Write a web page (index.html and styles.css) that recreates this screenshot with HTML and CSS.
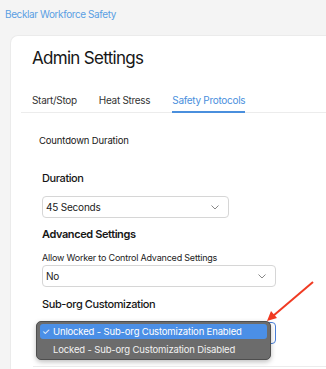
FILE: index.html
```html
<!DOCTYPE html>
<html>
<head>
<meta charset="utf-8">
<link rel="stylesheet" href="styles.css">
</head>
<body>
<div class="brand">Becklar Workforce Safety</div>
<div class="card">
  <h1 class="title">Admin Settings</h1>
  <div class="tabs">
    <span class="tab">Start/Stop</span>
    <span class="tab">Heat Stress</span>
    <span class="tab active">Safety Protocols</span>
  </div>
  <div class="content">
    <div class="section-title">Countdown Duration</div>
    <div class="fields">
      <div class="label first">Duration</div>
      <div class="select short"><span>45 Seconds</span><svg class="chev" width="8" height="5" viewBox="0 0 8 5"><path d="M0.5 0.5 L4 4 L7.5 0.5" fill="none" stroke="#888" stroke-width="1"/></svg></div>
      <div class="label adv">Advanced Settings</div>
      <div class="sublabel">Allow Worker to Control Advanced Settings</div>
      <div class="select"><span>No</span><svg class="chev" width="8" height="5" viewBox="0 0 8 5"><path d="M0.5 0.5 L4 4 L7.5 0.5" fill="none" stroke="#888" stroke-width="1"/></svg></div>
      <div class="label sub">Sub-org Customization</div>
      <div class="select-wrap">
        <div class="select focused"></div>
        <div class="menu">
          <div class="item selected"><span class="check">✓</span>Unlocked - Sub-org Customization Enabled</div>
          <div class="item">Locked - Sub-org Customization Disabled</div>
        </div>
      </div>
    </div>
    <div class="bottom-line"></div>
  </div>
</div>
<svg class="arrow" width="60" height="50" viewBox="0 0 60 50">
  <line x1="53" y1="3" x2="13" y2="37" stroke="#f03a22" stroke-width="2"/>
  <path d="M7 42 L11 32 L17 39 Z" fill="#f03a22"/>
</svg>
</body>
</html>
```
FILE: styles.css
```css
html, body {
  margin: 0;
  padding: 0;
}
body {
  background: #f4f4f4;
  font-family: Inter, "Noto Sans", sans-serif;
  width: 326px;
  height: 369px;
  overflow: hidden;
  position: relative;
}
.brand {
  color: #5a9fe3;
  font-size: 10px;
  letter-spacing: -0.4px;
  line-height: 14px;
  padding: 7px 0 0 5px;
}
.card {
  margin: 14px 0 0 10px;
  height: 334px;
  background: #fff;
  border-radius: 8px 0 0 0;
  border: 1px solid #ebebeb;
  border-right: none;
  border-bottom: none;
  box-sizing: border-box;
  overflow: hidden;
}
.title {
  margin: 0;
  padding: 10px 0 0 21px;
  font-size: 17px;
  letter-spacing: -0.7px;
  font-weight: 400;
  line-height: 24px;
  color: #161616;
}
.tabs {
  margin: 22px 0 0 10px;
  border-bottom: 1px solid #ececec;
  display: flex;
  padding-left: 11px;
}
.tab {
  font-size: 10px;
  letter-spacing: -0.3px;
  line-height: 14px;
  color: #333;
  padding: 1px 0 4px;
  margin-right: 22px;
}
.tab.active {
  color: #4a8fdd;
  border-bottom: 2px solid #4a8fdd;
  margin-bottom: -1px;
}
.content {
  padding-left: 28px;
}
.section-title {
  margin-top: 21px;
  font-size: 9.5px;
  letter-spacing: -0.15px;
  line-height: 13px;
  color: #161616;
}
.fields {
  padding-left: 3px;
}
.label {
  font-size: 11px;
  letter-spacing: -0.4px;
  font-weight: 500;
  line-height: 15px;
  color: #161616;
}
.label.first { margin-top: 24px; }
.label.adv { margin-top: 9px; font-weight: 600; }
.label.sub { margin-top: 10px; }
.select {
  box-sizing: border-box;
  height: 22px;
  width: 234px;
  border: 1px solid #d6d6d6;
  border-radius: 4px;
  display: flex;
  align-items: center;
  justify-content: space-between;
  padding: 0 9px 0 3px;
  font-size: 10px;
  letter-spacing: -0.2px;
  color: #222;
}
.select.short {
  width: 187px;
  margin-top: 10px;
}
.sublabel {
  font-size: 9px;
  letter-spacing: -0.2px;
  line-height: 12px;
  color: #222;
  margin-top: 10px;
  margin-bottom: 1px;
}
.select-wrap {
  position: relative;
  margin-top: 10px;
}
.select.focused {
  border: 1px solid #4a7fd8;
}
.menu {
  position: absolute;
  left: -6px;
  top: -1px;
  width: 235px;
  height: 39px;
  box-sizing: border-box;
  background: #6c6c6c;
  border: 1px solid #4e4e4e;
  border-radius: 5px;
  padding: 2px 3px;
  box-shadow: 0 2px 5px rgba(0,0,0,0.25);
}
.item {
  height: 15px;
  line-height: 15px;
  font-size: 9.5px;
  letter-spacing: -0.15px;
  color: #f2f2f2;
  padding-left: 13px;
  position: relative;
  border-radius: 3px;
  margin-bottom: 3px;
}
.item.selected {
  background: #4b8fe6;
  color: #fff;
}
.check {
  position: absolute;
  left: 2px;
  top: 0;
  font-size: 9px;
}
.bottom-line {
  margin-top: 22px;
  margin-left: -6px;
  border-top: 1px solid #ececec;
}
.arrow {
  position: absolute;
  left: 260px;
  top: 279px;
}
```
